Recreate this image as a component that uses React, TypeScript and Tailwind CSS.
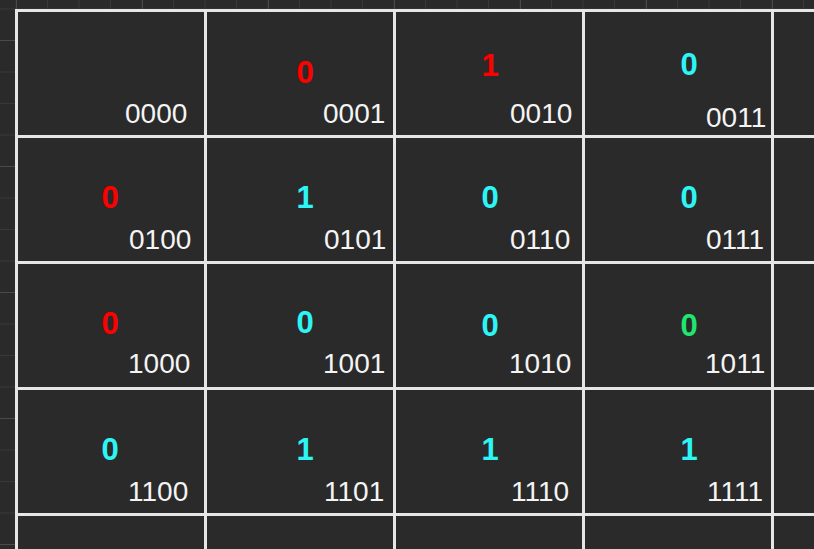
import React from 'react';

type Cell = {
  v: string;
  color: string;
  pos: string;
  label: string;
  labelPos: string;
};

const RED = 'text-[#ff0000]';
const CYAN = 'text-[#2ef5f5]';
const GREEN = 'text-[#1ee66e]';

// K-map rows, positions tuned per cell like the original drawing
const rows: Cell[][] = [
  [
    { v: '', color: RED, pos: 'mt-[45px] ml-[72px]', label: '0000', labelPos: 'mt-[13px] ml-[107px]' },
    { v: '0', color: RED, pos: 'mt-[46px] ml-[78px]', label: '0001', labelPos: 'mt-[12px] ml-[116px]' },
    { v: '1', color: RED, pos: 'mt-[39px] ml-[74px]', label: '0010', labelPos: 'mt-[19px] ml-[114px]' },
    { v: '0', color: CYAN, pos: 'mt-[38px] ml-[84px]', label: '0011', labelPos: 'mt-[24px] ml-[121px]' },
  ],
  [
    { v: '0', color: RED, pos: 'mt-[45px] ml-[72px]', label: '0100', labelPos: 'mt-[13px] ml-[111px]' },
    { v: '1', color: CYAN, pos: 'mt-[45px] ml-[78px]', label: '0101', labelPos: 'mt-[13px] ml-[117px]' },
    { v: '0', color: CYAN, pos: 'mt-[45px] ml-[74px]', label: '0110', labelPos: 'mt-[13px] ml-[114px]' },
    { v: '0', color: CYAN, pos: 'mt-[45px] ml-[84px]', label: '0111', labelPos: 'mt-[13px] ml-[121px]' },
  ],
  [
    { v: '0', color: RED, pos: 'mt-[45px] ml-[72px]', label: '1000', labelPos: 'mt-[11px] ml-[110px]' },
    { v: '0', color: CYAN, pos: 'mt-[44px] ml-[78px]', label: '1001', labelPos: 'mt-[12px] ml-[116px]' },
    { v: '0', color: CYAN, pos: 'mt-[47px] ml-[74px]', label: '1010', labelPos: 'mt-[9px] ml-[113px]' },
    { v: '0', color: GREEN, pos: 'mt-[47px] ml-[84px]', label: '1011', labelPos: 'mt-[9px] ml-[120px]' },
  ],
  [
    { v: '0', color: CYAN, pos: 'mt-[45px] ml-[72px]', label: '1100', labelPos: 'mt-[13px] ml-[110px]' },
    { v: '1', color: CYAN, pos: 'mt-[45px] ml-[78px]', label: '1101', labelPos: 'mt-[13px] ml-[117px]' },
    { v: '1', color: CYAN, pos: 'mt-[45px] ml-[74px]', label: '1110', labelPos: 'mt-[13px] ml-[115px]' },
    { v: '1', color: CYAN, pos: 'mt-[45px] ml-[84px]', label: '1111', labelPos: 'mt-[13px] ml-[122px]' },
  ],
];

const MapCell = ({ cell }: { cell: Cell }) => (
  <div className="flex flex-col bg-[#2a2a2a]">
    <div
      className={`${cell.pos} ${cell.color} w-[40px] h-[30px] leading-[30px] text-center text-[31px] font-bold font-['Liberation_Sans',Arial,sans-serif]`}
    >
      {cell.v}
    </div>
    <div
      className={`${cell.labelPos} h-[28px] leading-[28px] text-[28px] text-[#f4f4f4] font-['Liberation_Sans',Arial,sans-serif] whitespace-nowrap`}
    >
      {cell.label}
    </div>
  </div>
);

const Empty = () => <div className="bg-[#2a2a2a]" />;

export default function App() {
  return (
    <div className="w-[814px] h-[549px] overflow-hidden bg-[#2a2a2a] pt-[9px] pl-[15px] [background-image:linear-gradient(to_right,#4a4a4a_1px,transparent_1px),linear-gradient(to_bottom,#4a4a4a_1px,transparent_1px),linear-gradient(to_right,#383838_1px,transparent_1px),linear-gradient(to_bottom,#383838_1px,transparent_1px)] [background-size:126px_126px,126px_126px,31.5px_31.5px,31.5px_31.5px] [background-position:16px_40px,16px_40px,15.5px_8.5px,15.5px_8.5px]">
      <div className="grid w-max grid-cols-[repeat(5,186px)] grid-rows-[repeat(5,123px)] gap-[3px] p-[3px] bg-[#e6e6e6]">
        {rows.map((row, r) => (
          <React.Fragment key={r}>
            {row.map((cell, c) => (
              <MapCell key={c} cell={cell} />
            ))}
            <Empty />
          </React.Fragment>
        ))}
        {Array.from({ length: 5 }).map((_, i) => (
          <Empty key={`last-${i}`} />
        ))}
      </div>
    </div>
  );
}
